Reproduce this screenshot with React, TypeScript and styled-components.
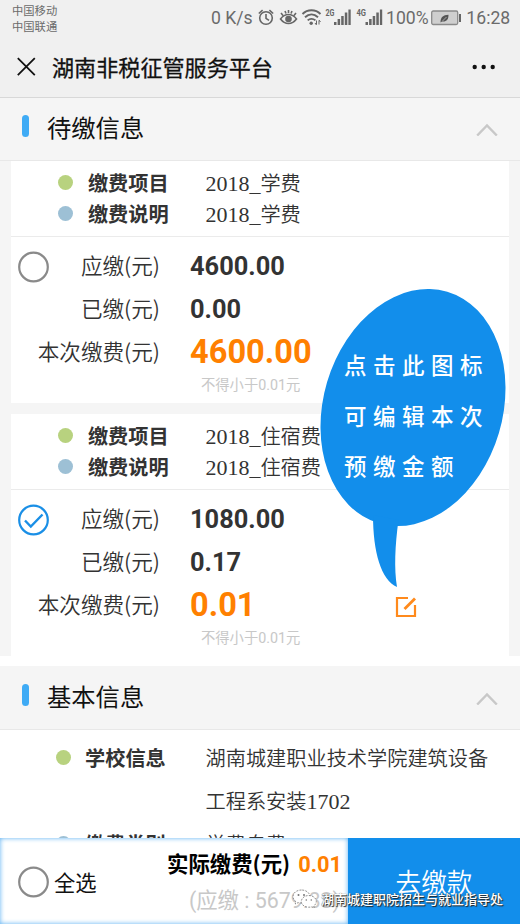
import React from "react";
import styled, { createGlobalStyle } from "styled-components";

const CJK = '"Noto Sans CJK SC", sans-serif';

const Global = createGlobalStyle`
  * { box-sizing: border-box; }
  body { margin: 0; background: #fff; font-family: Roboto, ${CJK}; color: #333; }
`;

const Page = styled.div`
  position: relative;
  width: 520px;
  height: 924px;
  overflow: hidden;
  background: #fff;
  display: flex;
  flex-direction: column;
`;

const StatusBar = styled.header`
  height: 36px;
  flex: none;
  background: #f0f0f0;
  display: flex;
  justify-content: space-between;
  padding: 2px 11px 0 12px;
  color: #6b6b6b;
`;

const Carriers = styled.div`
  font: 11.3px/16px ${CJK};
`;

const StatusRight = styled.div`
  display: flex;
  align-items: center;
  height: 32px;
  font-size: 17.6px;
`;

const StatusText = styled.span<{ $w: number }>`
  width: ${(p) => p.$w}px;
  white-space: nowrap;
`;

const NavBar = styled.nav`
  height: 62px;
  flex: none;
  background: #f0f0f0;
  border-bottom: 1px solid #d8d8d8;
  display: flex;
  align-items: center;
  padding: 0 24px 0 17px;
`;

const NavTitle = styled.h1`
  flex: 1;
  margin: -2px 0 0 16px;
  font: 400 22.1px/58px ${CJK};
  -webkit-text-stroke: 0.3px #111;
  color: #111;
`;

const SectionHead = styled.div<{ $h: number }>`
  height: ${(p) => p.$h}px;
  flex: none;
  background: #f5f5f5;
  border-bottom: 1px solid #e8e8e8;
  display: flex;
  align-items: center;
  padding: 0 22px 0 22px;
`;

const Marker = styled.i`
  width: 7px;
  height: 22px;
  border-radius: 4px;
  background: #3fabf5;
  margin-top: -6px;
`;

const SectionTitle = styled.h2`
  flex: 1;
  margin: -4px 0 0 18px;
  font: 400 24.3px/36px ${CJK};
  color: #111;
`;

const CardList = styled.main`
  flex: none;
  background: #f5f5f5;
  padding: 0 11px;
  margin-bottom: 10px;
  display: flex;
  flex-direction: column;
  gap: 11px;
`;

const Card = styled.section`
  height: 242px;
  background: #fff;
`;

const CardInfo = styled.div`
  height: 76px;
  padding-top: 6px;
  border-bottom: 1px solid #ebebeb;
`;

const InfoRow = styled.div<{ $line: number; $left: number; $labels: number }>`
  display: grid;
  grid-template-columns: 15px ${(p) => p.$labels}px 1fr;
  padding-left: ${(p) => p.$left}px;
  font: 350 20.2px/${(p) => p.$line}px ${CJK};
`;

const Dot = styled.i<{ $c: string; $line: number }>`
  width: 15px;
  height: 15px;
  border-radius: 50%;
  background: ${(p) => p.$c};
  margin-top: ${(p) => (p.$line - 15) / 2}px;
`;

const InfoLabel = styled.strong`
  padding-left: 14.5px;
  font-weight: 700;
`;

const Num = styled.span`
  font-family: "Liberation Serif", serif;
  font-size: 22px;
  line-height: 1;
`;

const CardBody = styled.div`
  display: grid;
  grid-template-columns: 149px 30px 1fr;
  grid-auto-rows: 43px;
  padding-top: 8px;
  position: relative;
`;

const AmountLabel = styled.span`
  text-align: right;
  font: 350 21.6px/40px ${CJK};
`;

const Amount = styled.span<{ $hot?: boolean }>`
  grid-column: 3;
  font: 700 ${(p) => (p.$hot ? 32.6 : 25.4)}px/43px Roboto, sans-serif;
  color: ${(p) => (p.$hot ? "#ff8000" : "#333")};
`;

const AmountLine = styled.div`
  grid-column: 3;
  display: flex;
  justify-content: space-between;
  align-items: center;
  padding-right: 92px;

  svg {
    margin-top: 2px;
  }
`;

const Note = styled.span`
  grid-column: 3;
  padding-left: 11px;
  font: 400 14.3px/22px Roboto, ${CJK};
  color: #c8c8c8;
`;

const CardRadio = styled.div`
  position: absolute;
  left: 6px;
  top: 14px;
  height: 32px;
`;

const Basic = styled.section`
  padding-top: 6px;
`;

const Footer = styled.footer`
  position: absolute;
  left: 0;
  right: 0;
  bottom: 0;
  height: 86px;
  display: flex;
`;

const Summary = styled.div`
  width: 348px;
  background: #fff;
  box-shadow: inset 0 0 5px #59aff2;
  display: flex;
  padding: 0 6px 0 17px;
`;

const SelectAll = styled.label`
  display: flex;
  align-items: center;
  gap: 5px;
  padding-top: 1px;
  font: 21.3px/30px ${CJK};
  color: #111;
`;

const Totals = styled.div`
  flex: 1;
  text-align: right;
  white-space: nowrap;
  padding-top: 7px;
`;

const Total = styled.div`
  font: 700 21.4px/36px ${CJK};
  color: #000;
`;

const TotalAmount = styled.span`
  font-family: Roboto, sans-serif;
  font-size: 21.8px;
  color: #ff8000;
  margin-left: 8px;
`;

const Due = styled.div`
  font: 400 21.4px/36px Roboto, ${CJK};
  color: #c8c8c8;
  padding-right: 2px;
`;

const PayButton = styled.button`
  flex: 1;
  border: 0;
  padding: 0;
  background: #128eeb;
  color: #fff;
  font: 350 25.6px/82px ${CJK};
`;

const Bubble = styled.aside`
  position: absolute;
  left: 310px;
  top: 280px;
  width: 200px;
  height: 310px;
`;

const BubbleText = styled.p`
  position: absolute;
  left: 34px;
  top: 59px;
  margin: 0;
  color: #fff;
  font: 500 22.5px/50.5px "Kaiti SC", KaiTi, STXingkai, ${CJK};
  letter-spacing: 6.5px;
  white-space: nowrap;
`;

const Watermark = styled.div`
  position: absolute;
  left: 291px;
  top: 887px;
  display: flex;
  align-items: center;
  gap: 3px;
  font: 500 13px/24px ${CJK};
  color: #fff;
  text-shadow: 1px 1px 1px #222, 0 0 1px #444;
  white-space: nowrap;
`;

const Radio = ({ checked = false }: { checked?: boolean }) => (
  <svg width="32" height="32" viewBox="0 0 32 32" fill="none">
    <circle cx="16.5" cy="16" r="14.3" stroke={checked ? "#1a8fe6" : "#8a8a8a"} strokeWidth="2.2" fill="#fff" />
    {checked && <path d="M8 16.5l5.8 6L25.5 10.5" stroke="#1a8fe6" strokeWidth="2.4" />}
  </svg>
);

const Chevron = () => (
  <svg width="22" height="14" viewBox="0 0 22 14" fill="none">
    <path d="M1.2 13.5L11 3.5l9.8 10" stroke="#c8c8c8" strokeWidth="2.4" />
  </svg>
);

const EditIcon = () => (
  <svg width="22" height="22" viewBox="0 0 22 22" fill="none" stroke="#ff8a1c" strokeWidth="2.2">
    <path d="M13 2H2v18h18V9" />
    <path d="M9.5 13L20 2.5" strokeWidth="2.8" />
  </svg>
);

const StatusIcons = () => (
  <svg width="130" height="24" viewBox="256 6 130 24" fill="none" stroke="#666" strokeWidth="1.6">
    <circle cx="266" cy="18" r="6.3" />
    <path d="M266 14v4.3l3 2M258.8 13.5l3.8-3.3M273.2 13.5l-3.8-3.3" />
    <path d="M280.5 19c4.5-6 11.5-6 16 0-4.5 6-11.5 6-16 0zM281 13l2 2.5M296 13l-2 2.5M285 11l1 2.5M292 11l-1 2.5M288.5 10v3" />
    <circle cx="288.5" cy="19" r="3.3" fill="#666" stroke="none" />
    <path d="M302.5 14c5-5 13-5 18 0M305 17.3c4-3.7 9-3.7 13 0M307.7 20.4c2-2 5.5-2 7.7 0" strokeWidth="1.9" />
    <circle cx="311.2" cy="23.3" r="1.7" fill="#666" stroke="none" />
    <path d="M316.5 20.5v4M319 20.5v4M315 23l1.5 2M320.5 22l-1.5-2" strokeWidth="1" />
    <g fill="#666" stroke="none">
      <text x="325.5" y="16" fontFamily="Roboto" fontSize="9.5" fontWeight="700" textLength="9" lengthAdjust="spacingAndGlyphs">2G</text>
      <text x="356.5" y="16" fontFamily="Roboto" fontSize="9.5" fontWeight="700" textLength="9.5" lengthAdjust="spacingAndGlyphs">4G</text>
      {[334, 365.5].map((x) => (
        <g key={x}>
          <rect x={x} y="22" width="2.5" height="3" />
          <rect x={x + 3.6} y="19" width="2.5" height="6" />
          <rect x={x + 7.2} y="16" width="2.5" height="9" />
          <rect x={x + 10.8} y="12.5" width="2.5" height="12.5" />
          <rect x={x + 14.4} y="9.5" width="2.3" height="15.5" />
        </g>
      ))}
    </g>
  </svg>
);

const Battery = () => (
  <svg width="31" height="16" viewBox="0 0 31 16">
    <rect x="0.7" y="1" width="26" height="13.5" rx="1.5" fill="#cfcfcf" stroke="#8a8a8a" strokeWidth="1.3" />
    <rect x="28" y="4" width="2" height="8" fill="#666" />
    <path d="M9.5 12.5c0-5 2.500-7.500 8-7.700 0 5-2 7.200-6.500 6.700z" fill="#555" />
    <path d="M11.5 11l4-4" stroke="#ccc" strokeWidth=".7" />
  </svg>
);

const WechatLogo = () => (
  <svg width="27" height="22" viewBox="0 0 27 22" fill="#fff" stroke="#777" strokeWidth=".8" strokeDasharray="2 1.2">
    <path d="M10.5 2C5.5 2 2 5 2 8.7c0 2 1.1 3.8 3 5L4.2 16l3-1.4c1 .3 2 .4 3.3.4 5 0 8.5-2.8 8.5-6.3S15.5 2 10.5 2z" />
    <path d="M17.8 7.5c4.3 0 7.5 2.7 7.5 6 0 1.8-1 3.4-2.6 4.5l.6 2-2.4-1.2c-1 .3-2 .4-3.1.4-4.3 0-7.5-2.5-7.5-5.7s3.2-6 7.5-6z" />
    <g fill="#777" stroke="none">
      <circle cx="7.5" cy="7" r="1" />
      <circle cx="13" cy="7" r="1" />
      <circle cx="15.3" cy="12" r=".8" />
      <circle cx="20.3" cy="12" r=".8" />
    </g>
  </svg>
);

interface Fee {
  item: string;
  due: string;
  paid: string;
  current: string;
  checked?: boolean;
}

const fees: Fee[] = [
  { item: "学费", due: "4600.00", paid: "0.00", current: "4600.00" },
  { item: "住宿费", due: "1080.00", paid: "0.17", current: "0.01", checked: true },
];

const GREEN = "#b8d27f";
const BLUE = "#9dc0d5";

interface InfoProps {
  label: string;
  color: string;
  line: number;
  left: number;
  labels: number;
  children: React.ReactNode;
}

const Info = ({ label, color, line, left, labels, children }: InfoProps) => (
  <InfoRow $line={line} $left={left} $labels={labels}>
    <Dot $c={color} $line={line} />
    <InfoLabel>{label}</InfoLabel>
    <span>{children}</span>
  </InfoRow>
);

const FeeCard = ({ fee }: { fee: Fee }) => (
  <Card>
    <CardInfo>
      {["缴费项目", "缴费说明"].map((label, i) => (
        <Info key={label} label={label} color={i ? BLUE : GREEN} line={31} left={47.4} labels={132}>
          <Num>2018_</Num>{fee.item}
        </Info>
      ))}
    </CardInfo>
    <CardBody>
      <CardRadio><Radio checked={fee.checked} /></CardRadio>
      <AmountLabel>应缴(元)</AmountLabel>
      <Amount>{fee.due}</Amount>
      <AmountLabel>已缴(元)</AmountLabel>
      <Amount>{fee.paid}</Amount>
      <AmountLabel>本次缴费(元)</AmountLabel>
      <AmountLine>
        <Amount $hot>{fee.current}</Amount>
        {fee.checked && <EditIcon />}
      </AmountLine>
      <Note>不得小于0.01元</Note>
    </CardBody>
  </Card>
);

export default function App() {
  return (
    <Page>
      <Global />
      <StatusBar>
        <Carriers>中国移动<br />中国联通</Carriers>
        <StatusRight>
          <StatusText $w={45}>0 K/s</StatusText>
          <StatusIcons />
          <StatusText $w={45}>100%</StatusText>
          <Battery />
          <StatusText $w={47}>&nbsp;16:28</StatusText>
        </StatusRight>
      </StatusBar>
      <NavBar>
        <svg width="19" height="20" viewBox="0 0 19 20" stroke="#111" strokeWidth="1.8">
          <path d="M.8 1.2l17 17M17.8 1.2l-17 17" />
        </svg>
        <NavTitle>湖南非税征管服务平台</NavTitle>
        <svg width="24" height="6" viewBox="0 0 24 6" fill="#111">
          <circle cx="2.7" cy="3" r="2.2" />
          <circle cx="11.7" cy="3" r="2.2" />
          <circle cx="20.7" cy="3" r="2.2" />
        </svg>
      </NavBar>
      <SectionHead $h={63}>
        <Marker />
        <SectionTitle>待缴信息</SectionTitle>
        <Chevron />
      </SectionHead>
      <CardList>
        {fees.map((f) => <FeeCard key={f.item} fee={f} />)}
      </CardList>
      <SectionHead $h={64}>
        <Marker />
        <SectionTitle>基本信息</SectionTitle>
        <Chevron />
      </SectionHead>
      <Basic>
        <Info label="学校信息" color={GREEN} line={43} left={55.5} labels={135}>
          湖南城建职业技术学院建筑设备<br />工程系安装<Num>1702</Num>
        </Info>
        <Info label="缴费类别" color={BLUE} line={43} left={55.5} labels={135}>学费自费</Info>
      </Basic>
      <Bubble>
        <svg width="200" height="310" viewBox="310 280 200 310" fill="#128eeb">
          <ellipse cx="413" cy="407.5" rx="89.6" ry="120.7" transform="rotate(16.5 413 407.5)" />
          <path d="M373 515C373 552 381 580 397 587C394 568 395 546 398.5 520Z" />
        </svg>
        <BubbleText>点击此图标<br />可编辑本次<br />预缴金额</BubbleText>
      </Bubble>
      <Footer>
        <Summary>
          <SelectAll><Radio />全选</SelectAll>
          <Totals>
            <Total>实际缴费(元)<TotalAmount>0.01</TotalAmount></Total>
            <Due>(应缴 : 5679.83)</Due>
          </Totals>
        </Summary>
        <PayButton>去缴款</PayButton>
      </Footer>
      <Watermark><WechatLogo />湖南城建职院招生与就业指导处</Watermark>
    </Page>
  );
}
